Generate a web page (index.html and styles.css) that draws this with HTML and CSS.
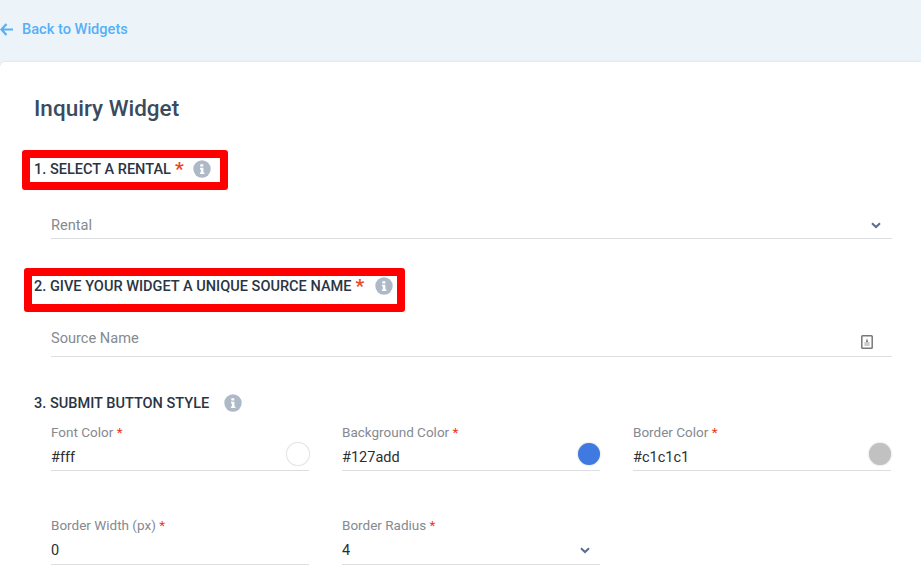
FILE: index.html
```html
<!DOCTYPE html>
<html lang="en">
<head>
<meta charset="utf-8">
<title>Inquiry Widget</title>
<link rel="stylesheet" href="styles.css">
</head>
<body>
<header class="topbar">
  <a class="back" href="#">
    <svg class="back-icon" viewBox="0 0 14 14" aria-hidden="true"><path d="M7 1.2 1.6 7 7 12.8M2 7h12" fill="none" stroke="currentColor" stroke-width="2.4"/></svg>
    <span>Back to Widgets</span>
  </a>
</header>
<main class="card">
  <h1 class="title">Inquiry Widget</h1>

  <section class="step step-one">
    <h2 class="step-head">
      <span>1. SELECT A RENTAL</span><span class="star">*</span>
      <svg class="info info-first" viewBox="0 0 18 18" aria-hidden="true"><circle cx="9" cy="9" r="8.7" fill="#adb9c7"/><path d="M7.3 4.2h3v2.4h-3zM7 7.8h3.4v4.6h1v1.5H6.9v-1.5h1v-3H7z" fill="#fff"/></svg>
      <span class="mark mark-one"></span>
    </h2>
    <div class="field field-select">
      <span class="placeholder">Rental</span>
      <svg class="chevron" viewBox="0 0 10 7" aria-hidden="true"><path d="M1 1.2 5 5l4-3.8" fill="none" stroke="#5a6f8a" stroke-width="2"/></svg>
    </div>
  </section>

  <section class="step step-two">
    <h2 class="step-head">
      <span>2. GIVE YOUR WIDGET A UNIQUE SOURCE NAME</span><span class="star">*</span>
      <svg class="info info-second" viewBox="0 0 18 18" aria-hidden="true"><circle cx="9" cy="9" r="8.7" fill="#adb9c7"/><path d="M7.3 4.2h3v2.4h-3zM7 7.8h3.4v4.6h1v1.5H6.9v-1.5h1v-3H7z" fill="#fff"/></svg>
      <span class="mark mark-two"></span>
    </h2>
    <div class="field field-source">
      <span class="placeholder">Source Name</span>
      <svg class="contact" viewBox="0 0 12 14" aria-hidden="true"><rect x=".8" y=".8" width="10.4" height="12.4" rx=".8" fill="none" stroke="#777" stroke-width="1.5"/><path d="M6 3.2 7.2 7H4.8z" fill="#777"/><path d="M3.4 7.4h5.2v1.2H3.4zM3.4 9.6h5.2v1H3.4z" fill="#999"/></svg>
    </div>
  </section>

  <section class="step step-three">
    <h2 class="step-head">
      <span>3. SUBMIT BUTTON STYLE</span>
      <svg class="info info-wide" viewBox="0 0 18 18" aria-hidden="true"><circle cx="9" cy="9" r="8.7" fill="#adb9c7"/><path d="M7.3 4.2h3v2.4h-3zM7 7.8h3.4v4.6h1v1.5H6.9v-1.5h1v-3H7z" fill="#fff"/></svg>
    </h2>
    <div class="grid">
      <div class="cell">
        <label class="label">Font Color <span class="req">*</span></label>
        <div class="value"><span>#fff</span><i class="swatch swatch-white"></i></div>
      </div>
      <div class="cell">
        <label class="label">Background Color <span class="req">*</span></label>
        <div class="value"><span>#127add</span><i class="swatch swatch-blue"></i></div>
      </div>
      <div class="cell">
        <label class="label">Border Color <span class="req">*</span></label>
        <div class="value"><span>#c1c1c1</span><i class="swatch swatch-grey"></i></div>
      </div>
      <div class="cell">
        <label class="label">Border Width (px) <span class="req">*</span></label>
        <div class="value value-tall"><span>0</span></div>
      </div>
      <div class="cell">
        <label class="label">Border Radius <span class="req">*</span></label>
        <div class="value value-tall"><span>4</span><svg class="chevron chevron-small" viewBox="0 0 10 7" aria-hidden="true"><path d="M1 1.2 5 5l4-3.8" fill="none" stroke="#5a6f8a" stroke-width="2"/></svg></div>
      </div>
    </div>
  </section>
</main>
</body>
</html>
```

FILE: styles.css
```css
* { box-sizing: border-box; }
html, body { margin: 0; height: 580px; overflow: hidden; }
body {
  background: #edf4f9;
  font-family: Roboto, "Liberation Sans", sans-serif;
  color: #2a3544;
}
.topbar {
  height: 62px;
  display: flex;
  align-items: center;
  padding-bottom: 4px;
}
.back {
  display: flex;
  align-items: center;
  gap: 9px;
  color: #56b0f8;
  font-size: 14.6px;
  font-weight: 500;
  text-decoration: none;
}
.back-icon { width: 13px; height: 13px; display: block; }
.card {
  background: #fff;
  border-radius: 5px 0 0 0;
  box-shadow: 0 0 2px rgba(60, 80, 100, .18);
  height: 518px;
  padding: 33px 29px 0 34px;
  overflow: hidden;
}
.title {
  margin: 0;
  font-size: 22.5px;
  line-height: 26px;
  font-weight: 500;
  color: #3a4b5f;
}
.step-head {
  position: relative;
  margin: 0;
  display: flex;
  align-items: center;
  height: 20px;
  font-size: 14.55px;
  font-weight: 500;
  color: #2a3544;
}
.star {
  color: #e8491f;
  font-size: 19px;
  font-weight: 700;
  margin-left: 4px;
  line-height: 19px;
  height: 19px;
  align-self: flex-start;
}
.info { width: 18px; height: 18px; flex: none; }
.info-first { margin-left: 9px; }
.info-second { margin-left: 11px; }
.info-wide { margin-left: 15px; }
.mark {
  position: absolute;
  border: 8px solid #f00;
  border-radius: 3px;
  pointer-events: none;
}
.mark-one { left: -12px; top: -9px; width: 206px; height: 40px; }
.mark-two { left: -10px; top: -8px; width: 381px; height: 44px; }
.step-one { margin-top: 38px; }
.step-two { margin-top: 37px; }
.step-three { margin-top: 36px; }
.field {
  margin-left: 17px;
  display: flex;
  align-items: center;
  justify-content: space-between;
  border-bottom: 1px solid #dcdfe2;
  font-size: 14.6px;
}
.field-select { height: 60px; padding: 33px 11px 0 0; width: 841px; }
.field-source { height: 61px; padding: 24px 19px 0 0; width: 841px; }
.placeholder { color: #858a90; }
.chevron { width: 10px; height: 7px; display: block; }
.contact { width: 12px; height: 14px; display: block; margin-top: 8px; }
.grid {
  display: grid;
  grid-template-columns: repeat(3, 258px);
  column-gap: 33px;
  row-gap: 45px;
  margin: 10px 0 0 17px;
}
.cell { display: flex; flex-direction: column; }
.label {
  font-size: 13.5px;
  line-height: 18px;
  color: #858a90;
}
.req { color: #e8391a; }
.value {
  height: 30px;
  display: flex;
  align-items: center;
  justify-content: space-between;
  border-bottom: 1px solid #dcdfe2;
  font-size: 14.5px;
  color: #2b2f33;
  padding-top: 3px;
}
.value-tall { height: 31px; }
.swatch {
  width: 22px;
  height: 22px;
  border-radius: 50%;
  margin: -6px 0 0;
  display: block;
  box-shadow: 0 0 2px rgba(0, 0, 0, .25);
}
.swatch-white { background: #fff; box-shadow: 0 0 0 1px #e4e4e4, 0 0 2px rgba(0, 0, 0, .2); }
.swatch-blue { background: #3f7ae0; }
.swatch-grey { background: #c1c1c1; }
.chevron-small { width: 10px; height: 7px; margin-right: 10px; }
```
